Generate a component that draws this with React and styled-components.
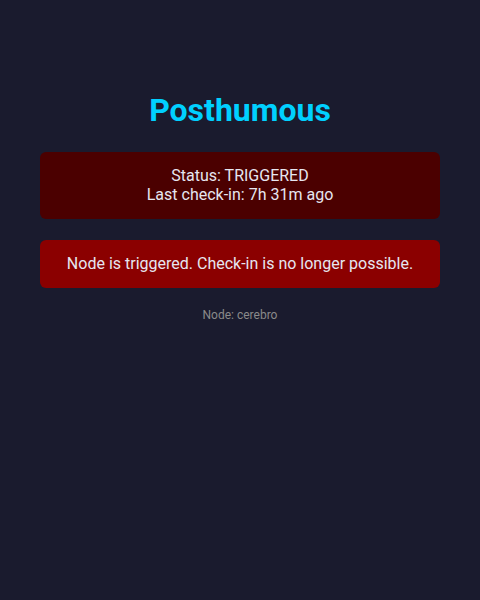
import styled, { createGlobalStyle } from "styled-components";

const GlobalStyle = createGlobalStyle`
  html, body {
    margin: 0;
    padding: 0;
    background: #1a1b2e;
    font-family: Roboto, "Liberation Sans", sans-serif;
    color: #e6e6e6;
  }
`;

const Page = styled.div`
  min-height: 600px;
  box-sizing: border-box;
  padding: 88px 40px 0;
  display: flex;
  flex-direction: column;
  align-items: stretch;
  text-align: center;
`;

const Title = styled.h1`
  margin: 0 0 20px;
  font-size: 32px;
  line-height: 44px;
  font-weight: 700;
  color: #00d0ff;
`;

const Panel = styled.div`
  background: ${(p) => (p.$alert ? "#8b0000" : "#4b0000")};
  border-radius: 6px;
  padding: 14px 16px 15px;
  font-size: 16px;
  line-height: 19px;
  color: #e6e6f0;
  margin-bottom: ${(p) => (p.$alert ? "19px" : "21px")};
`;

const NodeLabel = styled.div`
  font-size: 12px;
  line-height: 16px;
  color: #8a8a8a;
`;

export default function App() {
  return (
    <>
      <GlobalStyle />
      <Page>
        <Title>Posthumous</Title>
        <Panel>
          Status: TRIGGERED
          <br />
          Last check-in: 7h 31m ago
        </Panel>
        <Panel $alert>Node is triggered. Check-in is no longer possible.</Panel>
        <NodeLabel>Node: cerebro</NodeLabel>
      </Page>
    </>
  );
}
